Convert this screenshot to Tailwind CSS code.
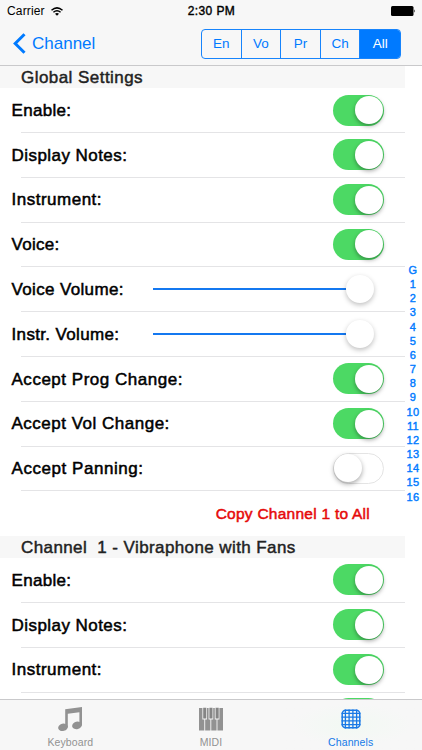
<!DOCTYPE html>
<html lang="en">
  <head>
    <meta charset="UTF-8" />
    <meta name="viewport" content="width=device-width, initial-scale=1.0" />
    <script src="https://cdn.jsdelivr.net/npm/@tailwindcss/browser@4"></script>
    <title>Channels</title>
  </head>
  <body class="bg-white text-black font-['Liberation_Sans',Arial,sans-serif]">
    <div class="flex flex-col h-screen overflow-hidden">
      <!-- Status bar and navigation -->
      <header class="h-[66px] shrink-0 bg-[#f7f7f7] border-b border-[#c9c9cb]">
        <div class="grid grid-cols-3 items-center h-[22px] pl-[7px] pr-[6px] text-[12px]">
          <div class="flex items-center gap-[6px]">
            <span class="tracking-[0.15px]">Carrier</span>
            <svg class="w-3 h-[9px]" viewBox="0 0 12 9" fill="none" stroke="#000" stroke-width="1.5">
              <path d="M.5 3.3Q6-1.6 11.5 3.3M2.4 5.3Q6 2.2 9.6 5.3" />
              <path d="M4 6.8Q6 5.2 8 6.8L6 8.8Z" fill="#000" stroke="none" />
            </svg>
          </div>
          <span class="text-center tracking-[0.4px] [-webkit-text-stroke:0.4px]">2:30 PM</span>
          <svg class="w-[25px] h-[10px] justify-self-end" viewBox="0 0 25 10">
            <rect width="22.5" height="10" rx="1.5" />
            <path d="M23.3 3.2q1.6 1.8 0 3.6z" />
          </svg>
        </div>
        <div class="flex items-center justify-between h-[43px] pl-[13px] pr-[21px] text-[#007aff]">
          <a class="flex items-center gap-[6px]">
            <svg class="w-[13px] h-[21px]" viewBox="0 0 13 21" fill="none" stroke="#007aff" stroke-width="3">
              <path d="M11.5 1.2 2.2 10.5l9.3 9.3" />
            </svg>
            <span class="text-[17px]">Channel</span>
          </a>
          <div class="grid grid-cols-5 w-[200px] h-[30px] mt-px border border-[#1784fc] rounded-[4px] divide-x divide-[#1784fc] overflow-hidden text-[13.5px] leading-[28px] text-center">
            <span>En</span>
            <span>Vo</span>
            <span>Pr</span>
            <span>Ch</span>
            <span class="bg-[#007aff] text-white">All</span>
          </div>
        </div>
      </header>

      <main class="flex flex-1 min-h-0 overflow-hidden">
        <div class="w-[405px] text-[17px]">
          <h2 class="h-[22px] pl-[21px] bg-[#f7f7f7] text-[#222] leading-6 tracking-[0.45px] [-webkit-text-stroke:0.45px]">Global Settings</h2>
          <ul class="[-webkit-text-stroke:0.5px]">
            <li class="h-[44.8px] pl-[11px]">
              <div class="flex items-center justify-between h-[44px] pl-[0.5px] pr-[21px]">
                <span class="pt-px tracking-[0.3px]">Enable:</span>
                <span class="flex justify-end w-[51px] h-[31px] p-[1.5px] rounded-full bg-[#4cd964]"><i class="size-7 rounded-full bg-white shadow-[0_2px_4px_rgba(0,0,0,0.35)]"></i></span>
              </div>
              <div class="ml-[10px] h-px bg-[#e4e4e6]"></div>
            </li>
            <li class="h-[44.8px] pl-[11px]">
              <div class="flex items-center justify-between h-[44px] pl-[0.5px] pr-[21px]">
                <span class="pt-px tracking-[0.45px]">Display Notes:</span>
                <span class="flex justify-end w-[51px] h-[31px] p-[1.5px] rounded-full bg-[#4cd964]"><i class="size-7 rounded-full bg-white shadow-[0_2px_4px_rgba(0,0,0,0.35)]"></i></span>
              </div>
              <div class="ml-[10px] h-px bg-[#e4e4e6]"></div>
            </li>
            <li class="h-[44.8px] pl-[11px]">
              <div class="flex items-center justify-between h-[44px] pl-[0.5px] pr-[21px]">
                <span class="pt-px tracking-[0.5px]">Instrument:</span>
                <span class="flex justify-end w-[51px] h-[31px] p-[1.5px] rounded-full bg-[#4cd964]"><i class="size-7 rounded-full bg-white shadow-[0_2px_4px_rgba(0,0,0,0.35)]"></i></span>
              </div>
              <div class="ml-[10px] h-px bg-[#e4e4e6]"></div>
            </li>
            <li class="h-[44.8px] pl-[11px]">
              <div class="flex items-center justify-between h-[44px] pl-[0.5px] pr-[21px]">
                <span class="pt-px tracking-[0.3px]">Voice:</span>
                <span class="flex justify-end w-[51px] h-[31px] p-[1.5px] rounded-full bg-[#4cd964]"><i class="size-7 rounded-full bg-white shadow-[0_2px_4px_rgba(0,0,0,0.35)]"></i></span>
              </div>
              <div class="ml-[10px] h-px bg-[#e4e4e6]"></div>
            </li>
            <li class="h-[44.8px] pl-[11px]">
              <div class="flex items-center justify-between h-[44px] pl-[0.5px] pr-[31px]">
                <span class="pt-px tracking-[0.35px]">Voice Volume:</span>
                <span class="flex items-center w-[221px]"><b class="flex-1 h-[2px] bg-[#1478f0]"></b><i class="size-7 rounded-full bg-white shadow-[0_2px_5px_rgba(0,0,0,0.25)]"></i></span>
              </div>
              <div class="ml-[10px] h-px bg-[#e4e4e6]"></div>
            </li>
            <li class="h-[44.8px] pl-[11px]">
              <div class="flex items-center justify-between h-[44px] pl-[0.5px] pr-[31px]">
                <span class="pt-px tracking-[0.35px]">Instr. Volume:</span>
                <span class="flex items-center w-[221px]"><b class="flex-1 h-[2px] bg-[#1478f0]"></b><i class="size-7 rounded-full bg-white shadow-[0_2px_5px_rgba(0,0,0,0.25)]"></i></span>
              </div>
              <div class="ml-[10px] h-px bg-[#e4e4e6]"></div>
            </li>
            <li class="h-[44.8px] pl-[11px]">
              <div class="flex items-center justify-between h-[44px] pl-[0.5px] pr-[21px]">
                <span class="pt-px tracking-[0.52px]">Accept Prog Change:</span>
                <span class="flex justify-end w-[51px] h-[31px] p-[1.5px] rounded-full bg-[#4cd964]"><i class="size-7 rounded-full bg-white shadow-[0_2px_4px_rgba(0,0,0,0.35)]"></i></span>
              </div>
              <div class="ml-[10px] h-px bg-[#e4e4e6]"></div>
            </li>
            <li class="h-[44.8px] pl-[11px]">
              <div class="flex items-center justify-between h-[44px] pl-[0.5px] pr-[21px]">
                <span class="pt-px tracking-[0.5px]">Accept Vol Change:</span>
                <span class="flex justify-end w-[51px] h-[31px] p-[1.5px] rounded-full bg-[#4cd964]"><i class="size-7 rounded-full bg-white shadow-[0_2px_4px_rgba(0,0,0,0.35)]"></i></span>
              </div>
              <div class="ml-[10px] h-px bg-[#e4e4e6]"></div>
            </li>
            <li class="h-[44.8px] pl-[11px]">
              <div class="flex items-center justify-between h-[44px] pl-[0.5px] pr-[21px]">
                <span class="pt-px tracking-[0.55px]">Accept Panning:</span>
                <span class="flex items-center w-[51px] h-[31px] rounded-full border-[1.5px] border-[#e4e4e4] bg-white"><i class="size-7 rounded-full bg-white shadow-[0_2px_5px_rgba(0,0,0,0.35)]"></i></span>
              </div>
              <div class="ml-[10px] h-px bg-[#e4e4e6]"></div>
            </li>
            <li class="flex items-center justify-end h-[44.8px] pr-[35px]">
              <a class="text-[15.5px] text-[#e60a0a] tracking-[0.25px]">Copy Channel 1 to All</a>
            </li>
          </ul>

          <h2 class="h-[22px] pl-[21px] bg-[#f7f7f7] text-[#222] leading-6 tracking-[0.4px] whitespace-pre [-webkit-text-stroke:0.45px]">Channel  1 - Vibraphone with Fans</h2>
          <ul class="[-webkit-text-stroke:0.5px]">
            <li class="h-[44.8px] pl-[11px]">
              <div class="flex items-center justify-between h-[44px] pl-[0.5px] pr-[21px]">
                <span class="pt-px tracking-[0.3px]">Enable:</span>
                <span class="flex justify-end w-[51px] h-[31px] p-[1.5px] rounded-full bg-[#4cd964]"><i class="size-7 rounded-full bg-white shadow-[0_2px_4px_rgba(0,0,0,0.35)]"></i></span>
              </div>
              <div class="ml-[10px] h-px bg-[#e4e4e6]"></div>
            </li>
            <li class="h-[44.8px] pl-[11px]">
              <div class="flex items-center justify-between h-[44px] pl-[0.5px] pr-[21px]">
                <span class="pt-px tracking-[0.45px]">Display Notes:</span>
                <span class="flex justify-end w-[51px] h-[31px] p-[1.5px] rounded-full bg-[#4cd964]"><i class="size-7 rounded-full bg-white shadow-[0_2px_4px_rgba(0,0,0,0.35)]"></i></span>
              </div>
              <div class="ml-[10px] h-px bg-[#e4e4e6]"></div>
            </li>
            <li class="h-[44.8px] pl-[11px]">
              <div class="flex items-center justify-between h-[44px] pl-[0.5px] pr-[21px]">
                <span class="pt-px tracking-[0.5px]">Instrument:</span>
                <span class="flex justify-end w-[51px] h-[31px] p-[1.5px] rounded-full bg-[#4cd964]"><i class="size-7 rounded-full bg-white shadow-[0_2px_4px_rgba(0,0,0,0.35)]"></i></span>
              </div>
              <div class="ml-[10px] h-px bg-[#e4e4e6]"></div>
            </li>
            <li class="flex justify-end h-[44.8px] pt-[6px] pr-[21px]">
              <span class="w-[51px] h-[31px] rounded-full bg-[#4cd964]"></span>
            </li>
          </ul>
        </div>

        <!-- Section index -->
        <ol class="flex-1 pt-[197px] pr-px text-[11px] leading-[14.15px] text-center text-[#007aff] tracking-[0.3px] [-webkit-text-stroke:0.4px]">
          <li>G</li>
          <li>1</li>
          <li>2</li>
          <li>3</li>
          <li>4</li>
          <li>5</li>
          <li>6</li>
          <li>7</li>
          <li>8</li>
          <li>9</li>
          <li>10</li>
          <li>11</li>
          <li>12</li>
          <li>13</li>
          <li>14</li>
          <li>15</li>
          <li>16</li>
        </ol>
      </main>

      <!-- Tab bar -->
      <nav class="grid grid-cols-3 h-[51px] shrink-0 bg-[#f7f7f7] border-t border-[#c9c9cb] text-[10.5px] text-[#929292] leading-3 tracking-[0.1px]">
        <a class="flex flex-col items-center pt-[7px] gap-[4px]">
          <svg class="w-6 h-[25px]" viewBox="0 0 24 25" fill="#929292">
            <path d="M7.2 2.2 24 0V18.5H21.4V5.2L9.8 6.7V20.5H7.2Z" />
            <ellipse cx="5" cy="20.3" rx="4.9" ry="3.7" transform="rotate(-15 5 20.3)" />
            <ellipse cx="19" cy="18.4" rx="4.9" ry="3.7" transform="rotate(-15 19 18.4)" />
          </svg>
          <span>Keyboard</span>
        </a>
        <a class="flex flex-col items-center pt-[7px] gap-[4px]">
          <svg class="w-6 h-[25px]" viewBox="0 0 24 25">
            <path d="M0 1H24V23.5H0Z" fill="#929292" />
            <path d="M5.7 12V24M11.8 12V24M18 12V24" stroke="#f7f7f7" stroke-width=".9" />
            <path d="M3.4 0H8V12.4H3.4ZM9.6 0H14.2V12.4H9.6ZM15.8 0H20.4V12.4H15.8Z" fill="#f7f7f7" />
            <path d="M4.2 .8H7.3V11.5H4.2ZM10.4 .8H13.5V11.5H10.4ZM16.6 .8H19.7V11.5H16.6Z" fill="#858585" />
          </svg>
          <span>MIDI</span>
        </a>
        <a class="flex flex-col items-center pt-[7px] gap-[4px] pr-[2px] text-[#1479e8] bg-radial from-[#f2f9f3] to-[#f7f7f7] to-60%">
          <svg class="w-5 h-[25px]" viewBox="0 0 20 25" fill="none" stroke="#1979e6">
            <rect x="1.2" y="3.2" width="17.6" height="17.6" rx="3.5" stroke-width="1.5" />
            <path d="M4.4 2.5V21.5M8.1 2.5V21.5M11.9 2.5V21.5M15.6 2.5V21.5M.5 6.4H19.5M.5 10.1H19.5M.5 13.9H19.5M.5 17.6H19.5" stroke-width="1.3" />
          </svg>
          <span>Channels</span>
        </a>
      </nav>
    </div>
  </body>
</html>
